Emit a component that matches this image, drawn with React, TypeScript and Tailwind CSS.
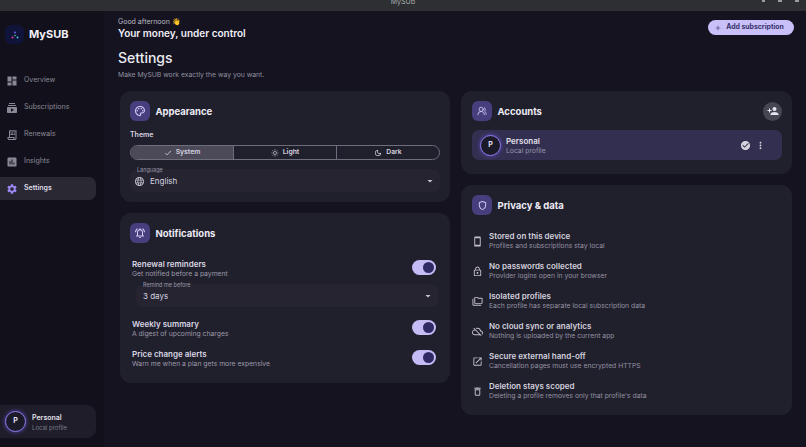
import type { ReactNode } from "react";
import type { IconType } from "react-icons";
import {
  MdAdd,
  MdArrowDropDown,
  MdAssessment,
  MdCheck,
  MdCheckCircle,
  MdDashboard,
  MdDeleteOutline,
  MdLanguage,
  MdMoreVert,
  MdOutlineCloudOff,
  MdOutlineDarkMode,
  MdOutlineFolderCopy,
  MdOutlineLightMode,
  MdOutlineLock,
  MdOutlineNotificationsActive,
  MdOutlineOpenInNew,
  MdOutlinePalette,
  MdOutlineReceiptLong,
  MdOutlineShield,
  MdOutlineSmartphone,
  MdPersonAdd,
  MdSettings,
  MdSubscriptions,
} from "react-icons/md";
import { LuUsersRound } from "react-icons/lu";

const navItems: { label: string; icon: IconType; active?: boolean }[] = [
  { label: "Overview", icon: MdDashboard },
  { label: "Subscriptions", icon: MdSubscriptions },
  { label: "Renewals", icon: MdOutlineReceiptLong },
  { label: "Insights", icon: MdAssessment },
  { label: "Settings", icon: MdSettings, active: true },
];

const privacyItems: { title: string; text: string; icon: IconType }[] = [
  { title: "Stored on this device", text: "Profiles and subscriptions stay local", icon: MdOutlineSmartphone },
  { title: "No passwords collected", text: "Provider logins open in your browser", icon: MdOutlineLock },
  { title: "Isolated profiles", text: "Each profile has separate local subscription data", icon: MdOutlineFolderCopy },
  { title: "No cloud sync or analytics", text: "Nothing is uploaded by the current app", icon: MdOutlineCloudOff },
  { title: "Secure external hand-off", text: "Cancellation pages must use encrypted HTTPS", icon: MdOutlineOpenInNew },
  { title: "Deletion stays scoped", text: "Deleting a profile removes only that profile's data", icon: MdDeleteOutline },
];

function Avatar() {
  return (
    <div className="flex h-[21px] w-[21px] shrink-0 items-center justify-center rounded-full border-[1.5px] border-[#8f7be8] bg-[#1b1a28] text-[7px] font-bold text-[#e4e0f2] shadow-[0_0_4px_#5d4cc0]">
      P
    </div>
  );
}

function CardTitle({ icon: Icon, title, size = 12 }: { icon: IconType; title: string; size?: number }) {
  return (
    <div className="flex items-center gap-[5.5px]">
      <div className="flex h-5 w-5 items-center justify-center rounded-[6px] bg-[#473e7e] text-[#d5cdf8]">
        <Icon size={size} />
      </div>
      <h2 className="pt-[2px] text-[9.5px] font-bold text-[#eeecf6]">{title}</h2>
    </div>
  );
}

function Card({ className, children }: { className: string; children: ReactNode }) {
  return <section className={`rounded-[11px] bg-[#201f2c] p-[10px] ${className}`}>{children}</section>;
}

function Toggle() {
  return (
    <div className="mt-[1px] flex h-[15px] w-[24px] items-center justify-end rounded-full bg-[#c5bcf6] pr-[2px]">
      <div className="h-[11px] w-[11px] rounded-full bg-[#2f2a64]" />
    </div>
  );
}

function SettingRow({ title, text }: { title: string; text: string }) {
  return (
    <div className="flex items-start justify-between pl-[2px] pr-[4px]">
      <div>
        <div className="text-[8px] leading-[10px] font-semibold text-[#d9d6e3]">{title}</div>
        <div className="text-[6.8px] leading-[10px] text-[#9d9aa9]">{text}</div>
      </div>
      <Toggle />
    </div>
  );
}

function SelectBox({ label, className, children }: { label: string; className: string; children: ReactNode }) {
  return (
    <div className={`relative flex h-[23px] items-center justify-between rounded-[7px] bg-[#252430] text-[8px] text-[#d7d4e0] ${className}`}>
      <span className="absolute -top-[2px] left-[7px] text-[5.5px] leading-[7px] text-[#9a97a6]">{label}</span>
      <div className="flex items-center gap-[5px] pt-[1px]">{children}</div>
      <MdArrowDropDown size={12} className="text-[#c9c6d2]" />
    </div>
  );
}

function ThemeButton({ icon: Icon, label, active }: { icon: IconType; label: string; active?: boolean }) {
  return (
    <div className={`flex h-full flex-1 items-center justify-center gap-[4px] border-r border-[#6f6c7b] text-[6.8px] font-semibold text-[#d8d5e1] last:border-r-0 ${active ? "bg-[#4c4959]" : ""}`}>
      <Icon size={8} />
      {label}
    </div>
  );
}

export default function App() {
  return (
    <div className="flex h-[447px] w-[806px] flex-col overflow-hidden bg-[#14131f] font-['Inter',sans-serif]">
      <div className="grid h-[11px] shrink-0 grid-cols-3 overflow-hidden bg-[#2d2f32] text-[#a9abae]">
        <div />
        <div className="text-center text-[7px] leading-[3px]">MySUB</div>
        <div className="flex justify-end gap-[13px] pr-[7px]">
          <div className="h-[2px] w-[3px] bg-[#9a9c9f]" />
          <div className="h-[2px] w-[4px] bg-[#9a9c9f]" />
          <div className="h-[2px] w-[4px] bg-[#9a9c9f]" />
        </div>
      </div>
      <div className="flex min-h-0 flex-1">
        <aside className="flex w-[104px] shrink-0 flex-col bg-[#12111b] pb-[9px]">
          <div className="flex items-center gap-[5px] pl-[5px] pt-[14px]">
            <div className="flex h-[19px] w-[19px] items-center justify-center rounded-[6px] bg-[#10133a]">
              <svg width="8" height="8" viewBox="0 0 8 8">
                <circle cx="4" cy="1.5" r="1" fill="#6f5cf0" />
                <circle cx="1.5" cy="6.5" r="1" fill="#e0468f" />
                <circle cx="6.5" cy="6.5" r="1" fill="#3fc7e0" />
                <circle cx="4" cy="4.5" r=".8" fill="#50d890" />
              </svg>
            </div>
            <span className="text-[11px] font-bold text-[#f1eff8]">MySUB</span>
          </div>
          <nav className="mt-[25px] flex w-[96px] flex-col gap-[4px]">
            {navItems.map(({ label, icon: Icon, active }) => (
              <div
                key={label}
                className={`flex h-[23px] items-center gap-[6px] rounded-r-[7px] pl-[6px] text-[7px] ${active ? "bg-[#292833] font-semibold text-[#dedbe7]" : "text-[#8a8895]"}`}
              >
                <Icon size={12} className={active ? "text-[#9c87f5]" : "text-[#8a8895]"} />
                {label}
              </div>
            ))}
          </nav>
          <div className="mt-auto flex h-[33px] w-[96px] items-center gap-[6px] rounded-r-[9px] bg-[#1e1d29] pl-[5px]">
            <Avatar />
            <div className="pt-[1px]">
              <div className="text-[7px] leading-[10px] font-semibold text-[#e2e0ea]">Personal</div>
              <div className="text-[6px] leading-[9px] text-[#7d7b88]">Local profile</div>
            </div>
          </div>
        </aside>
        <main className="flex-1 pl-[14px] pt-[6px]">
          <header className="flex items-start justify-between pr-[12px]">
            <div>
              <div className="text-[7px] leading-[9px] text-[#bcbac5]">Good afternoon 👋</div>
              <div className="text-[10px] leading-[14px] font-semibold text-[#f0eef6]">Your money, under control</div>
            </div>
            <button className="mt-[3px] flex h-[15px] w-[86px] items-center justify-center gap-[4px] rounded-full bg-[#c9c0fa] pr-[4px] text-[6.9px] font-bold text-[#37316a]">
              <MdAdd size={8} />
              Add subscription
            </button>
          </header>
          <h1 className="mt-[9px] text-[14px] leading-[18px] font-medium text-[#ecebf3]">Settings</h1>
          <p className="mt-[3px] text-[6.8px] leading-[9px] text-[#9290a0]">Make MySUB work exactly the way you want.</p>
          <div className="ml-[2px] mt-[12px] grid grid-cols-[330px_331px] gap-x-[11px]">
            <div className="flex flex-col gap-[11px]">
              <Card className="h-[111px]">
                <CardTitle icon={MdOutlinePalette} title="Appearance" />
                <div className="mt-[9px] text-[7px] leading-[9px] font-semibold text-[#d7d4e0]">Theme</div>
                <div className="mt-[6px] flex h-[15px] overflow-hidden rounded-full border border-[#6f6c7b]">
                  <ThemeButton icon={MdCheck} label="System" active />
                  <ThemeButton icon={MdOutlineLightMode} label="Light" />
                  <ThemeButton icon={MdOutlineDarkMode} label="Dark" />
                </div>
                <SelectBox label="Language" className="mt-[9px] pl-[4px] pr-[4px]">
                  <MdLanguage size={11} className="text-[#bdbac6]" />
                  English
                </SelectBox>
              </Card>
              <Card className="h-[170px]">
                <CardTitle icon={MdOutlineNotificationsActive} title="Notifications" />
                <div className="mt-[16px] flex flex-col">
                  <SettingRow title="Renewal reminders" text="Get notified before a payment" />
                  <SelectBox label="Remind me before" className="ml-[6px] mr-[2px] mt-[5px] pl-[7px] pr-[4px]">
                    3 days
                  </SelectBox>
                  <div className="mt-[12px]">
                    <SettingRow title="Weekly summary" text="A digest of upcoming charges" />
                  </div>
                  <div className="mt-[10px]">
                    <SettingRow title="Price change alerts" text="Warn me when a plan gets more expensive" />
                  </div>
                </div>
              </Card>
            </div>
            <div className="flex flex-col gap-[11px]">
              <Card className="h-[83px] pl-[11px]">
                <div className="flex items-center justify-between">
                  <CardTitle icon={LuUsersRound} title="Accounts" size={10} />
                  <div className="flex h-[19px] w-[19px] items-center justify-center rounded-full bg-[#464552] text-[#e5e3ec]">
                    <MdPersonAdd size={12} />
                  </div>
                </div>
                <div className="mt-[9px] flex h-[30px] items-center rounded-[7px] bg-[#332f50] pl-[8px] pr-[16px]">
                  <Avatar />
                  <div className="ml-[5px] flex-1 pt-[1px]">
                    <div className="text-[8px] leading-[10px] font-semibold text-[#e2e0ea]">Personal</div>
                    <div className="text-[6.8px] leading-[10px] text-[#9a97ab]">Local profile</div>
                  </div>
                  <MdCheckCircle size={11} className="text-[#d4d2dc]" />
                  <MdMoreVert size={11} className="ml-[4px] text-[#d4d2dc]" />
                </div>
              </Card>
              <Card className="h-[230px] pl-[11px]">
                <CardTitle icon={MdOutlineShield} title="Privacy & data" size={11} />
                <div className="mt-[16px] flex flex-col gap-[10px]">
                  {privacyItems.map(({ title, text, icon: Icon }) => (
                    <div key={title} className="flex items-center gap-[6px]">
                      <Icon size={11} className="shrink-0 text-[#c5c2ce]" />
                      <div>
                        <div className="text-[8px] leading-[10px] font-semibold text-[#d4d1dd]">{title}</div>
                        <div className="text-[6.8px] leading-[10px] text-[#9592a1]">{text}</div>
                      </div>
                    </div>
                  ))}
                </div>
              </Card>
            </div>
          </div>
        </main>
      </div>
    </div>
  );
}
